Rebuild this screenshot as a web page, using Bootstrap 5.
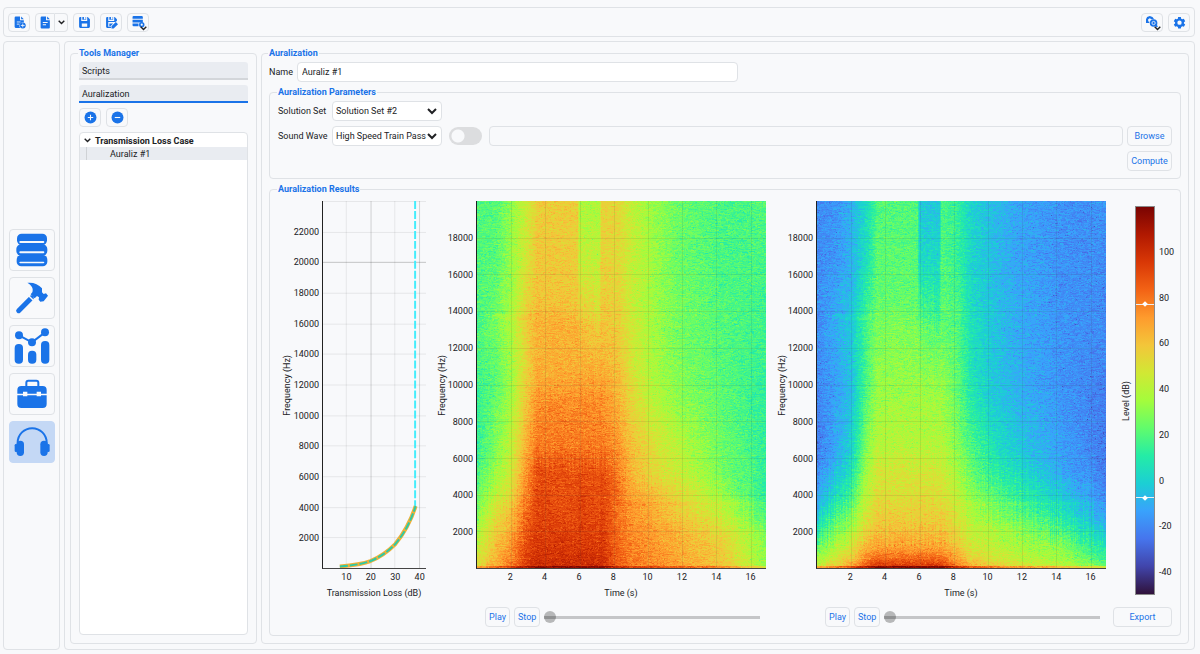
<!DOCTYPE html>
<html lang="en">
<head>
<meta charset="utf-8">
<meta name="viewport" content="width=device-width, initial-scale=1">
<title>Auralization</title>
<link href="https://cdn.jsdelivr.net/npm/bootstrap@5.3.0/dist/css/bootstrap.min.css" rel="stylesheet">
<style>
  :root { --blue: #1a73e8; --line: #dfe2e6; --bg: #f8f9fb; }
  body { font: 9px/12px Roboto, "Open Sans", sans-serif; color: #202124; background: var(--bg); padding: 7px 5px 4px 3px; }
  header.pane { height: 30px; }
  .pane { border: 1px solid var(--line); border-radius: 4px; }
  .group { border: 1px solid var(--line); border-radius: 4px; min-width: 0; display: flex; flex-direction: column; }
  .group > legend { float: none; width: auto; margin: 0 0 0 -1px; padding: 0 1px; font-size: 9px; line-height: 12px; font-weight: 700; color: var(--blue); }
  .tool { border: 1px solid var(--line); border-radius: 4px; background: var(--bg); color: var(--blue); padding: 0; width: 22px; height: 19px; display: inline-flex; align-items: center; justify-content: center; }
  .tool svg { width: 13px; height: 13px; fill: currentColor; flex: none; }
  .tool .chev { width: 7px; height: 5px; fill: none; stroke: #202124; stroke-width: 2; }
  .toolrow { gap: 5px; }
  .split .tool:first-child { border-radius: 4px 0 0 4px; width: 20px; }
  .split .tool:last-child { border-radius: 0 4px 4px 0; border-left: 0; width: 13px; }
  .tool .corner { position: absolute; right: 1px; bottom: 0; }
  .rail { width: 57px; gap: 6px; }
  .rail .tool { width: 46px; height: 42px; }
  .rail .tool svg { width: 36px; height: 36px; }
  .rail .tool.active { background: #c4d8f5; border-color: #c4d8f5; }
  .main { padding: 5px; min-width: 0; }
  .manager { width: 187px; gap: 5px; padding: 3px 8px 8px; }
  .work { padding: 3px 7px 7px; }
  .params { gap: 5px; margin-bottom: 4px; padding: 3px 8px 7px; }
  .outcome { padding: 6px 8px 8px; }
  .kind { border: 0; border-bottom: 2px solid #d3d6da; border-radius: 3px 3px 0 0; background: #e9ecf1; color: #202124; text-align: left; padding: 2px 3px 1px; height: 18px; }
  .kind.active { border-bottom-color: var(--blue); }
  .tree { background: #fff; border: 1px solid var(--line); border-radius: 4px; padding-top: 1px; }
  .tree button { display: flex; align-items: center; border: 0; width: 100%; height: 13px; background: none; color: inherit; padding: 0 4px; }
  .tree svg { width: 7px; height: 5px; fill: none; stroke: #202124; stroke-width: 2; margin-right: 4px; }
  .tree .child { background: #e9ecf1; padding-left: 6px; }
  .tree .child::before { content: ""; width: 1px; height: 13px; background: #cfd2d6; margin-right: 23px; }
  .field { height: 20px; min-height: 20px; border: 1px solid var(--line); border-radius: 4px; font-size: 9px; line-height: 12px; padding: 2px 4px; color: #202124; background-color: #fff; }
  .field:disabled { background: transparent; }
  .pick { width: 110px; padding: 2px 14px 2px 3px; background-image: url("data:image/svg+xml,%3Csvg xmlns='http://www.w3.org/2000/svg' viewBox='0 0 10 7'%3E%3Cpath d='M1 1l4 4 4-4' fill='none' stroke='%23202124' stroke-width='2'/%3E%3C/svg%3E"); background-size: 10px 7px; background-position: right 4px center; }
  .name-box { width: 441px; padding-left: 4px; }
  .name-label { width: 24px; }
  .param { width: 54px; white-space: nowrap; }
  .act { border: 1px solid var(--line); border-radius: 4px; background: var(--bg); color: var(--blue); font-size: 9px; line-height: 12px; padding: 0 3px; height: 20px; min-width: 25px; text-align: center; }
  .act.wide { width: 45px; }
  .export { margin-left: -2px; }
  .toggle.form-check-input { width: 33px; height: 18px; margin: 0 7px; border: 0; border-radius: 9px; background: #dcdddf radial-gradient(circle, #f8f9fb 6px, transparent 7px) 1px center / 16px 16px no-repeat; }
  .results { display: grid; grid-template-columns: 148fr 331fr 331fr 57px; grid-template-rows: minmax(200px, 1fr) auto; column-gap: 9px; row-gap: 6px; flex: 1; }
  .plot { display: grid; grid-template-columns: 13px 28px 1fr; grid-template-rows: 1fr 16px 16px; min-width: 0; }
  .plot.loss { grid-template-columns: 18px 26px 1fr; }
  .side-label { writing-mode: vertical-rl; transform: rotate(180deg); align-self: center; justify-self: center; line-height: 12px; white-space: nowrap; }
  .area { border-left: 1px solid #222; border-bottom: 1px solid #444; position: relative; min-height: 0; }
  .area canvas, .area svg { position: absolute; inset: 0; width: 100%; height: 100%; display: block; }
  .ticks { position: relative; }
  .ticks span { position: absolute; line-height: 12px; }
  .ticks.v span { right: 3px; transform: translateY(-50%); }
  .ticks.h span { top: 2px; transform: translateX(-50%); }
  .axis-name { grid-column: 3; text-align: center; padding-top: 2px; white-space: nowrap; }
  .scale-bar { display: grid; grid-template-columns: 12px 20px 1fr; padding: 5px 0 6px 5px; column-gap: 3px; }
  .scale-bar .ticks.v span { left: 1px; right: auto; }
  .ramp { position: relative; border: 1px solid #8a8a8a; background: linear-gradient(to top, #30123b, #4145ab, #4675ed, #39a2fc, #1bcfd4, #24eca6, #61fc6c, #a4fc3c, #d1e834, #f3c63a, #fe9b2d, #f36315, #d93806, #b11901, #7a0402); }
  .handle { position: absolute; left: 0; right: 0; height: 1px; background: #eee; }
  .handle::after { content: ""; position: absolute; left: 50%; top: 50%; width: 4px; height: 4px; background: #fff; transform: translate(-50%, -50%) rotate(45deg); }
  .player { display: flex; align-items: center; gap: 4px; padding: 0 6px 0 50px; }
  .seek { appearance: none; flex: 1; min-width: 0; height: 20px; background: none; margin: 0; }
  .seek::-webkit-slider-runnable-track { height: 3px; background: #c5c6c8; }
  .seek::-webkit-slider-thumb { appearance: none; width: 12px; height: 12px; margin-top: -5px; border-radius: 50%; background: linear-gradient(#b7b8b9 5px, #919293 5px 8px, #b7b8b9 8px); }
  .seek::-moz-range-track { height: 3px; background: #c5c6c8; }
</style>
</head>
<body class="d-flex flex-column min-vh-100">

<header class="pane d-flex align-items-center px-1 mb-1" role="toolbar" aria-label="Project">
  <div class="d-flex toolrow">
    <button class="tool" aria-label="New project"><svg viewBox="0 0 24 24"><path d="M5 1h8v7h7v4a6.500 6.500 0 0 0-7 10H5a2 2 0 0 1-2-2V3a2 2 0 0 1 2-2zM15 1l5 5h-5z"/><path d="M7 11h7M7 15h5" stroke="#f8f9fb" stroke-width="1.500"/><circle cx="18" cy="17.500" r="5.500"/><path d="M18 14v7M14.500 17.500h7" stroke="#f8f9fb" stroke-width="1.500"/></svg></button>
    <div class="split d-flex">
      <button class="tool" aria-label="Open project"><svg viewBox="0 0 24 24"><path d="M5 1h8v7h7v13a2 2 0 0 1-2 2H5a2 2 0 0 1-2-2V3a2 2 0 0 1 2-2zM15 1l5 5h-5z"/><path d="M7 12h9M7 16h6" stroke="#f8f9fb" stroke-width="2"/></svg></button>
      <button class="tool" aria-label="Recent projects"><svg class="chev" viewBox="0 0 10 7"><path d="M1 1l4 4 4-4"/></svg></button>
    </div>
    <button class="tool" aria-label="Save"><svg viewBox="0 0 24 24"><path fill-rule="evenodd" d="M2 4a2 2 0 0 1 2-2h2v7h11V2h1l4 4v14a2 2 0 0 1-2 2H4a2 2 0 0 1-2-2zM7 14v6h10v-6zM8 2h3v4h3V2h1v5H8z"/></svg></button>
    <button class="tool" aria-label="Save as"><svg viewBox="0 0 24 24"><path d="M2 4a2 2 0 0 1 2-2h2v7h11V2h1l4 4v3l-3 2H6v9h5v2H4a2 2 0 0 1-2-2zM8 2h3v4h3V2h1v5H8zM12 23v-4l8-8 4 4-8 8zM8 14h7l-5 5H8z"/></svg></button>
    <button class="tool position-relative" aria-label="Databases"><svg viewBox="0 0 24 24"><path d="M3 0h15a2 2 0 0 1 2 2v3H1V2a2 2 0 0 1 2-2zM1 7h19v5H1zM1 14h11v5H3a2 2 0 0 1-2-2z"/><circle cx="18" cy="16" r="5"/><circle cx="18" cy="16" r="2" fill="#f8f9fb"/></svg><svg class="chev corner" viewBox="0 0 10 7"><path d="M1 1l4 4 4-4"/></svg></button>
  </div>
  <div class="d-flex toolrow ms-auto">
    <button class="tool position-relative" aria-label="Search"><svg viewBox="0 0 24 24"><path d="M0 13V6l2-4 5-2 5 2 3 4h-5L7 4 4 6v4h2v3z"/><circle cx="14" cy="13" r="7"/><circle cx="14" cy="13" r="3" fill="none" stroke="#f8f9fb" stroke-width="1.500"/><path d="M17 16l4 4" stroke="currentColor" stroke-width="3"/></svg><svg class="chev corner" viewBox="0 0 10 7"><path d="M1 1l4 4 4-4"/></svg></button>
    <button class="tool" aria-label="Settings"><svg viewBox="0 0 24 24"><path fill-rule="evenodd" d="M9.500 2h5l.6 3 2 1.100 2.900-1 2.500 4.400-2.300 2v2.200l2.300 2-2.500 4.300-2.900-1-2 1.200-.6 2.800h-5l-.6-2.800-2-1.200-2.900 1L1.500 15.700l2.300-2v-2.200l-2.300-2L4 5.100l2.900 1L8.900 5zM12 8.300a4 4 0 1 0 0 8 4 4 0 0 0 0-8z"/></svg></button>
  </div>
</header>

<div class="d-flex flex-grow-1 gap-1">
  <nav class="pane rail d-flex flex-column align-items-center justify-content-center" aria-label="Modules">
    <button class="tool" aria-label="Databases"><svg viewBox="-7 -5 108 108"><g><rect x="2" width="90" height="34" rx="14"/><rect y="32" width="93" height="34" rx="14"/><rect x="1" y="64" width="92" height="34" rx="14"/></g><g fill="#f8f9fb"><rect x="9" y="22" width="75" height="6" rx="3"/><rect x="9" y="53" width="75" height="6" rx="3"/><rect x="9" y="84" width="75" height="5" rx="3"/></g></svg></button>
    <button class="tool" aria-label="Build"><svg viewBox="-5 -7 108 108"><path d="M9 85L47 47" stroke="currentColor" stroke-width="15" stroke-linecap="round"/><path d="M39 40l17 17" stroke="#f8f9fb" stroke-width="4"/><path d="M35 2C53 0 68 6 79 18v12l5 5 7-2 6 7-13 17-10 1-5-6 1-7-6-4-7 7-12-12 5-6c4-12-2-21-15-29z"/></svg></button>
    <button class="tool" aria-label="Results"><svg viewBox="-2 -1 108 108"><rect y="47" width="25" height="59" rx="12"/><rect x="40" y="67" width="25" height="39" rx="12"/><rect x="79" y="38" width="25" height="68" rx="12"/><path d="M13 21l39 21 39-30" fill="none" stroke="currentColor" stroke-width="6"/><circle cx="13" cy="21" r="12"/><circle cx="52" cy="42" r="12"/><circle cx="91" cy="12" r="12"/></svg></button>
    <button class="tool" aria-label="Toolbox"><svg viewBox="-8 -10 108 108"><rect x="29" y="4" width="36" height="26" rx="6" fill="none" stroke="currentColor" stroke-width="6"/><path d="M14 20h64a12 12 0 0 1 12 12v11H2V32a12 12 0 0 1 12-12zM2 48h88v26a12 12 0 0 1-12 12H14A12 12 0 0 1 2 74z"/><path d="M19 37h13v14H19zM60 37h13v14H60z" fill="#f8f9fb"/></svg></button>
    <button class="tool active" aria-label="Auralization"><svg viewBox="-2 -10 108 108"><path d="M9 50v-4a43 43 0 0 1 87 0v4" fill="none" stroke="currentColor" stroke-width="6"/><rect y="50" width="9" height="24" rx="4"/><rect x="96" y="50" width="9" height="24" rx="4"/><rect x="6" y="40" width="22" height="46" rx="11"/><rect x="77" y="40" width="22" height="46" rx="11"/></svg></button>
  </nav>

  <main class="pane d-flex flex-grow-1 gap-1 main">
    <fieldset class="group manager">
      <legend>Tools Manager</legend>
      <button class="kind">Scripts</button>
      <button class="kind active">Auralization</button>
      <div class="d-flex toolrow">
        <button class="tool" aria-label="Add"><svg viewBox="0 0 24 24"><circle cx="12" cy="12" r="11"/><path d="M12 7v10M7 12h10" stroke="#f8f9fb" stroke-width="2"/></svg></button>
        <button class="tool" aria-label="Remove"><svg viewBox="0 0 24 24"><circle cx="12" cy="12" r="11"/><path d="M7 12h10" stroke="#f8f9fb" stroke-width="2"/></svg></button>
      </div>
      <div class="tree flex-grow-1">
        <button class="fw-bold"><svg viewBox="0 0 10 7"><path d="M1 1l4 4 4-4"/></svg>Transmission Loss Case</button>
        <button class="child">Auraliz #1</button>
      </div>
    </fieldset>

    <fieldset class="group flex-grow-1 work">
      <legend>Auralization</legend>
      <div class="d-flex align-items-center gap-1 mb-1">
        <label class="name-label" for="name">Name</label>
        <input id="name" class="form-control field name-box" value="Auraliz #1">
      </div>

      <fieldset class="group params">
        <legend>Auralization Parameters</legend>
        <div class="d-flex align-items-center">
          <label class="param" for="solution">Solution Set</label>
          <select id="solution" class="form-select field pick"><option>Solution Set #2</option></select>
        </div>
        <div class="d-flex align-items-center">
          <label class="param" for="wave">Sound Wave</label>
          <select id="wave" class="form-select field pick"><option>High Speed Train Pass</option></select>
          <input class="form-check-input toggle" type="checkbox" role="switch" aria-label="Use a sound file">
          <input class="form-control field flex-grow-1 w-auto me-1" aria-label="Sound file" disabled>
          <button class="act wide">Browse</button>
        </div>
        <div class="d-flex justify-content-end"><button class="act wide">Compute</button></div>
      </fieldset>

      <fieldset class="group flex-grow-1 outcome">
        <legend>Auralization Results</legend>
        <div class="results">
          <div class="plot loss">
            <div class="side-label">Frequency (Hz)</div>
            <div class="ticks v" data-max="24000" data-from="2000" data-to="22000" data-step="2000"></div>
            <div class="area">
              <svg viewBox="0 0 104 368" preserveAspectRatio="none" fill="none" role="img" aria-label="Transmission loss curve">
                <g id="loss-grid" stroke="#000"></g>
                <path d="M93 0V307" stroke="#45ecfb" stroke-width="2" stroke-dasharray="8 2"/>
                <path d="M17 366.500C28 365.500 38 364.500 48 361 60 356 67 350 73 344 82 333 88 323 93.500 306" stroke="#f0b038" stroke-width="4"/>
                <path d="M17 366.500C28 365.500 38 364.500 48 361 60 356 67 350 73 344 82 333 88 323 93.500 306" stroke="#2fc9a4" stroke-width="2" stroke-dasharray="8 2"/>
              </svg>
            </div>
            <div></div><div></div>
            <div class="ticks h" data-max="42.600" data-from="10" data-to="40" data-step="10"></div>
            <div class="axis-name">Transmission Loss (dB)</div>
          </div>

          <div class="plot">
            <div class="side-label">Frequency (Hz)</div>
            <div class="ticks v" data-max="20000" data-from="2000" data-to="18000" data-step="2000"></div>
            <div class="area"><canvas data-source="incident" role="img" aria-label="Spectrogram of the sound wave"></canvas></div>
            <div></div><div></div>
            <div class="ticks h" data-max="16.900" data-from="2" data-to="16" data-step="2"></div>
            <div class="axis-name">Time (s)</div>
          </div>

          <div class="plot">
            <div class="side-label">Frequency (Hz)</div>
            <div class="ticks v" data-max="20000" data-from="2000" data-to="18000" data-step="2000"></div>
            <div class="area"><canvas data-source="transmitted" role="img" aria-label="Spectrogram of the transmitted sound"></canvas></div>
            <div></div><div></div>
            <div class="ticks h" data-max="16.900" data-from="2" data-to="16" data-step="2"></div>
            <div class="axis-name">Time (s)</div>
          </div>

          <div class="scale-bar">
            <div class="side-label">Level (dB)</div>
            <div class="ramp"><div class="handle" data-level="77"></div><div class="handle" data-level="-8"></div></div>
            <div class="ticks v" data-min="-50" data-max="120" data-from="-40" data-to="100" data-step="20"></div>
          </div>

          <div></div>
          <div class="player"><button class="act">Play</button><button class="act">Stop</button><input class="seek" type="range" value="0" aria-label="Sound wave position"></div>
          <div class="player"><button class="act">Play</button><button class="act">Stop</button><input class="seek" type="range" value="0" aria-label="Transmitted sound position"></div>
          <button class="act export">Export</button>
        </div>
      </fieldset>
    </fieldset>
  </main>
</div>

<script src="https://cdn.jsdelivr.net/npm/bootstrap@5.3.0/dist/js/bootstrap.bundle.min.js"></script>
<script>
// Axis tick labels
document.querySelectorAll('.ticks').forEach(axis => {
  const d = axis.dataset, min = +(d.min || 0), max = +d.max;
  for (let v = +d.from; v <= +d.to; v += +d.step) {
    const s = document.createElement('span');
    s.textContent = v;
    const p = (v - min) / (max - min) * 100;
    if (axis.classList.contains('v')) s.style.top = (100 - p) + '%';
    else s.style.left = p + '%';
    axis.append(s);
  }
});
document.querySelectorAll('.handle').forEach(h => h.style.bottom = (+h.dataset.level + 50) / 170 * 100 + '%');

// Grid of the transmission loss plot
let grid = '';
for (let f = 2000; f <= 24000; f += 2000) {
  const y = Math.round(368 - f / 24000 * 368) + 0.5;
  grid += `<path d="M0 ${y}H104" opacity="${f === 20000 ? 0.22 : 0.08}"/>`;
}
[10, 20, 30, 40].forEach(l => {
  const x = Math.round(l / 42.6 * 104) - 0.5;
  grid += `<path d="M${x} 0V368" opacity="${l % 20 ? 0.08 : 0.17}"/>`;
});
document.getElementById('loss-grid').innerHTML = grid;

// Spectrograms: levels on a coarse time/frequency mesh, interpolated, with noise
const turbo = ['30123b','4145ab','4675ed','39a2fc','1bcfd4','24eca6','61fc6c','a4fc3c','d1e834','f3c63a','fe9b2d','f36315','d93806','b11901','7a0402']
  .map(h => [0, 2, 4].map(i => parseInt(h.substr(i, 2), 16)));
const times = [0,18,34,50,60,100,102,122,124,140,154,175,200,245,289];
const levels = {
  incident: [
    [0,  41,41,48,56,63,63,51,51,62,61,55,49,44,40,41],
    [60, 41,42,49,58,64,63,55,54,62,61,55,50,44,40,40],
    [100,40,43,50,62,65,64,61,58,63,62,56,50,45,41,39],
    [125,40,45,52,63,68,68,66,63,65,63,57,50,45,41,39],
    [160,40,43,50,62,68,68,68,67,67,65,58,51,46,41,38],
    [182,38,42,50,64,69,70,70,70,70,67,60,52,47,42,37],
    [200,38,43,51,65,73,73,73,73,73,68,61,54,48,42,37],
    [250,38,46,55,70,76,76,76,76,76,73,66,60,54,44,37],
    [270,40,48,57,73,82,81,82,81,82,75,67,61,55,45,38],
    [290,43,52,60,75,83,82,83,82,84,78,70,66,60,48,36],
    [310,46,58,66,78,83,82,84,82,84,76,72,69,63,54,40],
    [335,52,63,70,82,85,84,85,84,86,78,74,71,68,61,46],
    [366,60,68,76,86,88,88,88,88,88,80,76,74,70,65,48]
  ],
  transmitted: [
    [0,  18,19,24,32,41,41,27,27,40,37,30,26,22,19,19],
    [60, 18,20,24,33,42,42,31,31,41,38,30,26,22,19,18],
    [100,18,22,26,38,43,43,38,36,42,40,32,27,23,19,18],
    [130,18,23,28,40,46,46,44,42,43,41,33,27,23,19,18],
    [190,17,21,26,42,49,49,49,49,49,43,34,28,24,19,16],
    [250,16,22,30,48,53,53,53,53,53,47,41,34,28,21,15],
    [268,18,24,33,50,57,57,57,57,56,50,43,37,31,22,16],
    [300,23,33,41,55,60,60,60,60,60,55,49,44,38,29,18],
    [325,33,43,50,60,64,64,64,64,64,59,54,51,46,38,25],
    [345,43,50,57,67,69,69,69,69,69,64,57,54,51,46,33],
    [358,50,57,64,75,78,78,78,78,77,70,62,58,54,50,38],
    [366,56,62,70,82,86,86,86,86,86,76,69,64,59,54,44]
  ]
};
function find(list, v) {
  let i = 0;
  while (i < list.length - 2 && v >= list[i + 1]) i++;
  return [i, Math.max(0, Math.min(1, (v - list[i]) / (list[i + 1] - list[i])))];
}
function draw(canvas) {
  const w = canvas.width = canvas.clientWidth, h = canvas.height = canvas.clientHeight;
  if (!w || !h) return;
  const incident = canvas.dataset.source === 'incident';
  const rows = levels[canvas.dataset.source], ys = rows.map(r => r[0]);
  const ctx = canvas.getContext('2d'), img = ctx.createImageData(w, h);
  let seed = 12345;
  const rnd = () => (seed = (seed * 1664525 + 1013904223) >>> 0) / 4294967296;
  const shift = Array.from({ length: w }, () => (rnd() - 0.5) * 14);
  let held = 0;
  for (let y = 0; y < h; y++) {
    const v = y / h * 368;
    for (let x = 0; x < w; x++) {
      const [j, q] = find(ys, v < 345 ? v + shift[x] : v), [i, p] = find(times, x / w * 289);
      const a = rows[j], b = rows[j + 1];
      let t = (a[i + 1] * (1 - p) + a[i + 2] * p) * (1 - q) + (b[i + 1] * (1 - p) + b[i + 2] * p) * q;
      if (y >= h - 2) t += incident ? 9 : 12;
      // streaks of the whistle near 13.8 kHz and the tone near 3.5 kHz
      if (Math.abs(v - 116) < 3 && x / w > 0.05 && x / w < 0.19) t += 2.5;
      if (Math.abs(v - 303) < 2 && x / w > 0.48) t += 2;
      if (rnd() < 0.6) held = (rnd() + rnd() + rnd() - 1.5) * 4;
      let n = held + (rnd() - 0.5) * 2;
      if (rnd() < 0.012) n -= 5;
      t = Math.max(0, Math.min(99.9, t + n)) / 100 * 14;
      const k = Math.floor(t), f = t - k, o = (y * w + x) * 4;
      for (let c = 0; c < 3; c++) img.data[o + c] = turbo[k][c] * (1 - f) + turbo[k + 1][c] * f;
      img.data[o + 3] = 255;
    }
  }
  ctx.putImageData(img, 0, 0);
  ctx.fillStyle = 'rgba(60,60,60,.1)';
  for (let s = 2; s < 17; s += 2) ctx.fillRect(Math.round(s / 16.9 * w), 0, 1, h);
  for (let f = 2; f < 20; f += 2) ctx.fillRect(0, Math.round(h - f / 20 * h), w, 1);
}
const drawAll = () => document.querySelectorAll('canvas').forEach(draw);
drawAll();
addEventListener('resize', drawAll);
</script>
</body>
</html>
